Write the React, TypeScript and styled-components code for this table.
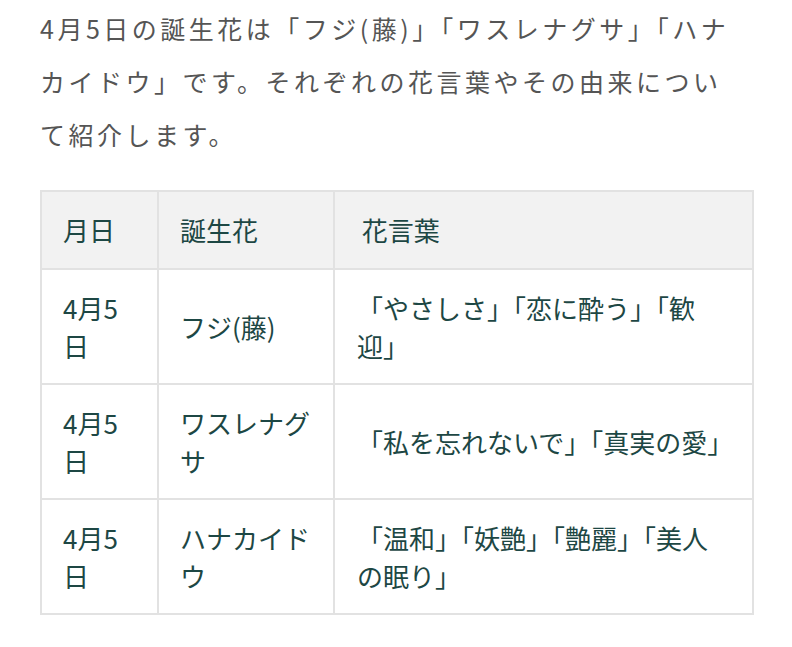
import React from 'react';
import styled, { createGlobalStyle } from 'styled-components';

const GlobalStyle = createGlobalStyle`
  html, body {
    margin: 0;
    padding: 0;
    background: #fff;
  }
  body {
    font-family: 'Noto Sans CJK JP', 'Noto Sans', sans-serif;
  }
`;

const Page = styled.main`
  padding: 2px 40px 32px;
`;

const Lead = styled.p`
  margin: 0 8px 29px 0;
  font-size: 25px;
  line-height: 53px;
  letter-spacing: 3.5px;
  color: #555;
`;

const Table = styled.table`
  width: 712px;
  border-collapse: collapse;
  table-layout: fixed;
  color: #1d4744;
  font-size: 26px;
  line-height: 38px;
`;

const HeadCell = styled.th`
  background: #f2f2f2;
  font-weight: 400;
  text-align: left;
  padding: 19px 20px 19px 21px;
  border: 2px solid #e2e2e2;
`;

const Cell = styled.td<{ $last?: boolean }>`
  padding: ${(p) => (p.$last ? '19px 25px 18px 22px' : '19px 20px 18px 21px')};
  border: 2px solid #e2e2e2;
  vertical-align: middle;
`;

const Phrase = styled.span`
  white-space: nowrap;
`;

const columns = [
  { label: '月日', width: 117 },
  { label: '誕生花', width: 176 },
  { label: '\u00a0花言葉', width: 419 },
];

const rows = [
  { date: '4月5日', flower: 'フジ(藤)', words: ['「やさしさ」「恋に酔う」「歓迎」'] },
  { date: '4月5日', flower: 'ワスレナグサ', words: ['「私を忘れないで」「真実の愛」'] },
  { date: '4月5日', flower: 'ハナカイドウ', words: ['「温和」「妖艶」「艶麗」「美人', 'の眠り」'] },
];

function App() {
  return (
    <>
      <GlobalStyle />
      <Page>
        <Lead>
          4月5日の誕生花は「フジ(藤)」「ワスレナグサ」「ハナカイドウ」です。それぞれの花言葉やその由来について紹介します。
        </Lead>

        <Table>
          <colgroup>
            {columns.map((col) => (
              <col key={col.label} style={{ width: col.width }} />
            ))}
          </colgroup>
          <thead>
            <tr>
              {columns.map((col) => (
                <HeadCell key={col.label}>{col.label}</HeadCell>
              ))}
            </tr>
          </thead>
          <tbody>
            {rows.map((row) => (
              <tr key={row.flower}>
                <Cell>{row.date}</Cell>
                <Cell>{row.flower}</Cell>
                <Cell $last>
                  {row.words[0]}
                  {row.words[1] && <Phrase>{row.words[1]}</Phrase>}
                </Cell>
              </tr>
            ))}
          </tbody>
        </Table>
      </Page>
    </>
  );
}

export default App;
